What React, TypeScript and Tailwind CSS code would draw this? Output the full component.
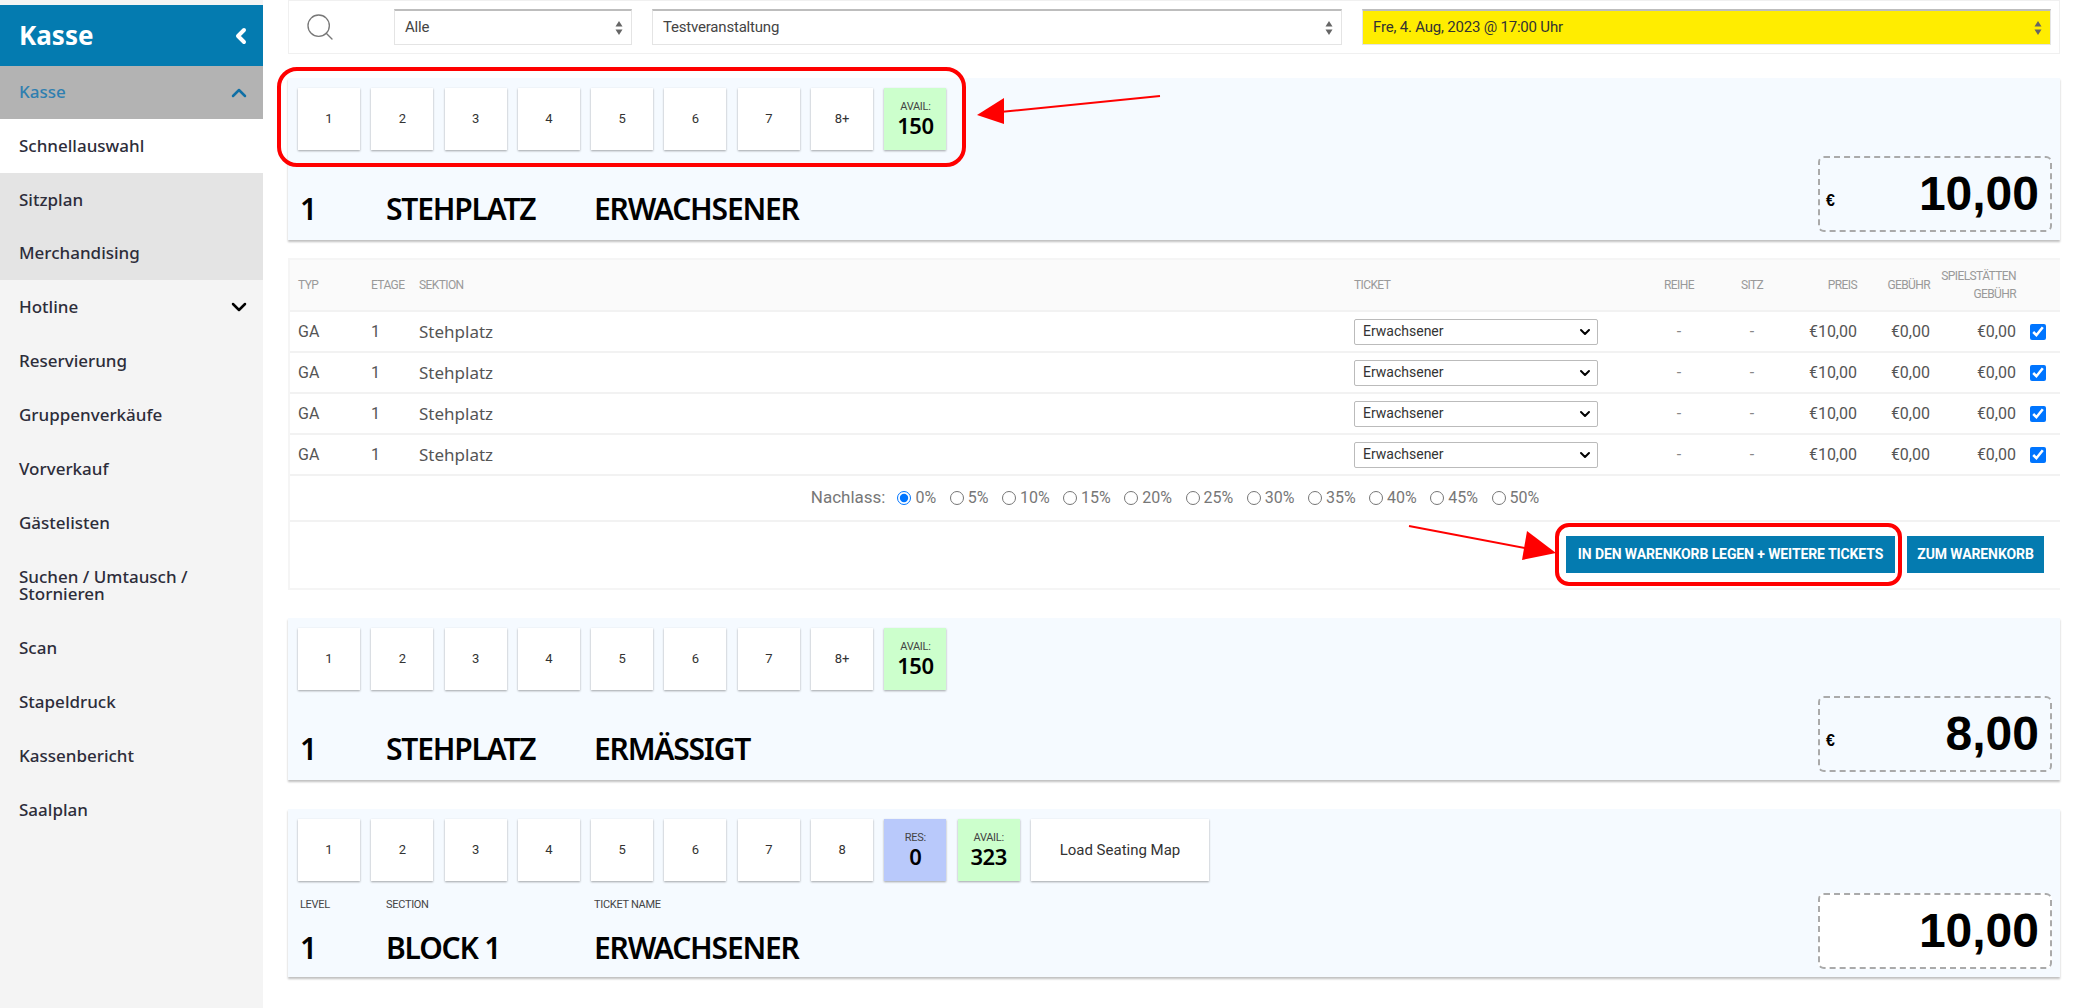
import React from 'react';
import { ChevronDown, ChevronLeft, ChevronUp, Search } from 'lucide-react';

const sans = "font-['Noto_Sans','Open_Sans',sans-serif]";
const narrow = "font-['Roboto',sans-serif]";

const UpDown: React.FC = () => (
    <svg width="8" height="14" viewBox="0 0 8 14" className="shrink-0 fill-[#666]">
        <path d="M4 0 L7.5 5.5 H0.5 Z" />
        <path d="M4 14 L7.5 8.5 H0.5 Z" />
    </svg>
);

const Picker: React.FC<{ label: string; className: string }> = ({ label, className }) => (
    <div className={`h-9 flex items-center justify-between pl-[10px] pr-[8px] border border-[#e4e4e4] border-t-2 border-t-[#bdbdbd] text-[15px] tracking-[-0.2px] text-[#444] font-['Roboto',sans-serif] ${className}`}>
        <span>{label}</span>
        <UpDown />
    </div>
);

const QtyButton: React.FC<{ label: string }> = ({ label }) => (
    <div className="w-[62px] h-[62px] bg-white flex items-center justify-center text-[13px] text-[#333] font-['Roboto',sans-serif] shadow-[0_1px_2px_rgba(0,0,0,0.35)]">
        {label}
    </div>
);

const StatBox: React.FC<{ label: string; value: string; className: string }> = ({ label, value, className }) => (
    <div className={`w-[62px] h-[62px] flex flex-col items-center justify-center pb-[2px] shadow-[0_1px_2px_rgba(0,0,0,0.35)] ${className}`}>
        <span className={`text-[11px] leading-[13px] tracking-[-0.3px] text-[#444] ${narrow}`}>{label}</span>
        <span className={`text-[22px] leading-[24px] font-semibold text-black tracking-[-0.5px] ${sans}`}>{value}</span>
    </div>
);

const PriceBox: React.FC<{ value: string; euro?: boolean; white?: boolean }> = ({ value, euro = true, white }) => (
    <div className={`w-[234px] h-[76px] mb-2 mr-2 flex items-center justify-between pl-[6px] pr-[11px] border-2 border-dashed border-[#aaa] rounded-md font-['Liberation_Sans',sans-serif] font-bold text-black ${white ? 'bg-white' : ''}`}>
        <span className="text-[16px] mt-[14px]">{euro ? '€' : ''}</span>
        <span className="text-[48px] leading-none">{value}</span>
    </div>
);

const TitleRow: React.FC<{ level: string; section: string; ticket: string }> = ({ level, section, ticket }) => (
    <div className={`h-9 pl-3 flex items-center text-[30px] font-semibold text-black tracking-[-1.2px] ${sans}`}>
        <span className="w-[86px]">{level}</span>
        <span className="w-[208px]">{section}</span>
        <span>{ticket}</span>
    </div>
);

const TicketCard: React.FC<{ className?: string; children: React.ReactNode; price: React.ReactNode }> = ({ className = '', children, price }) => (
    <div className={`bg-[#f5faff] flex justify-between items-end shadow-[0_2px_2px_rgba(0,0,0,0.25)] ${className}`}>
        <div className="self-start pt-[10px] pl-[10px]">{children}</div>
        {price}
    </div>
);

const Buttons: React.FC<{ labels: string[]; children: React.ReactNode }> = ({ labels, children }) => (
    <div className="flex gap-[11.3px]">
        {labels.map((l) => (
            <QtyButton key={l} label={l} />
        ))}
        {children}
    </div>
);

const cols = 'grid grid-cols-[73px_48px_935px_280px_90px_56px_77px_73px_86px_44px] items-center pl-[8px]';

const Row: React.FC = () => (
    <div className={`${cols} h-[41px] border-b-2 border-[#f2f2f2] text-[16px] text-[#555] font-['Roboto',sans-serif]`}>
        <span>GA</span>
        <span>1</span>
        <span className={`${sans} text-[17px]`}>Stehplatz</span>
        <div className="relative w-[244px] h-[26px]">
            <select className="w-full h-full appearance-none bg-white border border-[#bbb] rounded-[2px] text-[14px] text-[#333] pl-[8px] font-['Roboto',sans-serif]" defaultValue="Erwachsener">
                <option>Erwachsener</option>
            </select>
            <ChevronDown size={16} strokeWidth={3} className="absolute right-[5px] top-[5px] text-black pointer-events-none" />
        </div>
        <span className="text-center text-[#888]">-</span>
        <span className="text-center text-[#888]">-</span>
        <span className="text-right">€10,00</span>
        <span className="text-right">€0,00</span>
        <span className="text-right">€0,00</span>
        <span className="flex justify-center">
            <input type="checkbox" defaultChecked className="w-4 h-4 accent-[#0075ff]" />
        </span>
    </div>
);

const discounts = ['0%', '5%', '10%', '15%', '20%', '25%', '30%', '35%', '40%', '45%', '50%'];
const menu = ['Hotline', 'Reservierung', 'Gruppenverkäufe', 'Vorverkauf', 'Gästelisten', 'Suchen / Umtausch / Stornieren', 'Scan', 'Stapeldruck', 'Kassenbericht', 'Saalplan'];

const App: React.FC = () => {
    return (
        <div className="relative w-[2078px] h-[1008px] bg-white overflow-hidden flex">

            {/* Sidebar */}
            <aside className={`w-[263px] shrink-0 bg-[#f4f4f4] pt-[5px] text-[17px] font-medium text-[#2d2d3a] ${sans}`}>
                <div className="h-[61px] bg-[#047bb0] flex items-center justify-between pl-[19px] pr-[10px] text-white text-[26px] font-bold">
                    Kasse
                    <ChevronLeft size={24} strokeWidth={4} />
                </div>
                <div className="h-[53px] bg-[#b3b3b3] flex items-center justify-between pl-[19px] pr-[12px] text-[#2f7fb0]">
                    <span className="-mt-[2px]">Kasse</span>
                    <ChevronUp size={24} strokeWidth={2.5} className="text-[#0f6fa5]" />
                </div>
                <div className="h-[54px] bg-white flex items-center pl-[19px]">Schnellauswahl</div>
                <div className="bg-[#e4e4e4]">
                    <div className="h-[53px] flex items-center pl-[19px]">Sitzplan</div>
                    <div className="h-[54px] flex items-center pl-[19px]">Merchandising</div>
                </div>
                {menu.map((item) => (
                    <div key={item} className={`${item.startsWith('Suchen') ? 'h-[71px]' : 'h-[54px]'} flex items-center justify-between pl-[19px] pr-[12px] leading-[17px]`}>
                        <span className="max-w-[210px] -mt-[1px]">{item}</span>
                        {item === 'Hotline' && <ChevronDown size={24} strokeWidth={2.5} className="text-black" />}
                    </div>
                ))}
            </aside>

            {/* Main */}
            <main className="flex-1 pl-[25px] pr-[18px]">
                <div className="h-[54px] border border-[#f0f0f0] flex items-center pl-[15px] pr-[8px]">
                    <Search size={32} strokeWidth={1} className="text-[#777] shrink-0 mr-[58px]" />
                    <Picker label="Alle" className="w-[238px] mr-5" />
                    <Picker label="Testveranstaltung" className="w-[690px] mr-5" />
                    <Picker label="Fre, 4. Aug, 2023 @ 17:00 Uhr" className="flex-1 bg-[#ffed00] !text-[#333]" />
                </div>

                <TicketCard className="mt-6 h-[162px]" price={<PriceBox value="10,00" />}>
                    <Buttons labels={['1', '2', '3', '4', '5', '6', '7', '8+']}>
                        <StatBox label="AVAIL:" value="150" className="bg-[#ccffcc]" />
                    </Buttons>
                    <div className="mt-[40px] -ml-[10px]">
                        <TitleRow level="1" section="STEHPLATZ" ticket="ERWACHSENER" />
                    </div>
                </TicketCard>

                {/* Cart table */}
                <div className="mt-[18px] h-[332px] border-2 border-[#f5f5f5] border-r-0">
                    <div className={`${cols} h-[52px] bg-[#fafafa] border-b-2 border-[#f2f2f2] text-[12px] leading-[18px] tracking-[-0.6px] text-[#999] ${narrow}`}>
                        <span>TYP</span>
                        <span>ETAGE</span>
                        <span>SEKTION</span>
                        <span>TICKET</span>
                        <span className="text-center">REIHE</span>
                        <span className="text-center">SITZ</span>
                        <span className="text-right">PREIS</span>
                        <span className="text-right">GEBÜHR</span>
                        <span className="text-right">SPIELSTÄTTEN GEBÜHR</span>
                        <span />
                    </div>
                    <Row />
                    <Row />
                    <Row />
                    <Row />
                    <div className="h-[46px] border-b-2 border-[#f2f2f2] flex items-center justify-center text-[16px] text-[#777] font-['Roboto',sans-serif]">
                        <span className="mr-[12px] text-[17px]">Nachlass:</span>
                        {discounts.map((d, i) => (
                            <label key={d} className="flex items-center gap-[4px] mr-[13.5px] last:mr-0">
                                <input type="radio" name="nachlass" defaultChecked={i === 0} className="w-[14px] h-[14px] m-0 accent-[#0075ff]" />
                                {d}
                            </label>
                        ))}
                    </div>
                    <div className={`h-[64px] flex justify-end items-start pt-[14px] pr-[16px] gap-3 text-[14px] font-bold tracking-[-0.1px] text-white ${narrow}`}>
                        <div className="w-[329px] h-[37px] bg-[#047bb0] flex items-center justify-center">IN DEN WARENKORB LEGEN + WEITERE TICKETS</div>
                        <div className="w-[137px] h-[37px] bg-[#047bb0] flex items-center justify-center">ZUM WARENKORB</div>
                    </div>
                </div>

                <TicketCard className="mt-[28px] h-[162px]" price={<PriceBox value="8,00" />}>
                    <Buttons labels={['1', '2', '3', '4', '5', '6', '7', '8+']}>
                        <StatBox label="AVAIL:" value="150" className="bg-[#ccffcc]" />
                    </Buttons>
                    <div className="mt-[40px] -ml-[10px]">
                        <TitleRow level="1" section="STEHPLATZ" ticket="ERMÄSSIGT" />
                    </div>
                </TicketCard>

                <TicketCard className="mt-[29px] h-[168px]" price={<PriceBox value="10,00" euro={false} white />}>
                    <Buttons labels={['1', '2', '3', '4', '5', '6', '7', '8']}>
                        <StatBox label="RES:" value="0" className="bg-[#b9c9fb]" />
                        <StatBox label="AVAIL:" value="323" className="bg-[#ccffcc]" />
                        <div className={`w-[178px] h-[62px] bg-white flex items-center justify-center text-[15px] text-[#333] ${narrow} shadow-[0_1px_2px_rgba(0,0,0,0.35)]`}>
                            Load Seating Map
                        </div>
                    </Buttons>
                    <div className={`mt-[17px] -ml-[10px] pl-3 flex h-[14px] items-center text-[11px] tracking-[-0.3px] text-[#444] ${narrow}`}>
                        <span className="w-[86px]">LEVEL</span>
                        <span className="w-[208px]">SECTION</span>
                        <span>TICKET NAME</span>
                    </div>
                    <div className="mt-[17px] -ml-[10px]">
                        <TitleRow level="1" section="BLOCK 1" ticket="ERWACHSENER" />
                    </div>
                </TicketCard>
            </main>

            {/* Annotations drawn over the screenshot */}
            <div className="absolute left-[277px] top-[67px] w-[689px] h-[100px] border-4 border-[#f00] rounded-[20px]" />
            <div className="absolute left-[1555px] top-[523px] w-[347px] h-[63px] border-4 border-[#f00] rounded-[14px]" />
            <svg className="absolute left-[960px] top-[80px]" width="210" height="50" viewBox="0 0 210 50">
                <path d="M200 16 L40 32" stroke="#f00" strokeWidth="2" />
                <path d="M17 35 L44 18 L44 44 Z" fill="#f00" />
            </svg>
            <svg className="absolute left-[1400px] top-[515px]" width="165" height="50" viewBox="0 0 165 50">
                <path d="M9 11 L130 34" stroke="#f00" strokeWidth="2" />
                <path d="M156 38 L122 45 L127 16 Z" fill="#f00" />
            </svg>
        </div>
    );
};

export default App;
